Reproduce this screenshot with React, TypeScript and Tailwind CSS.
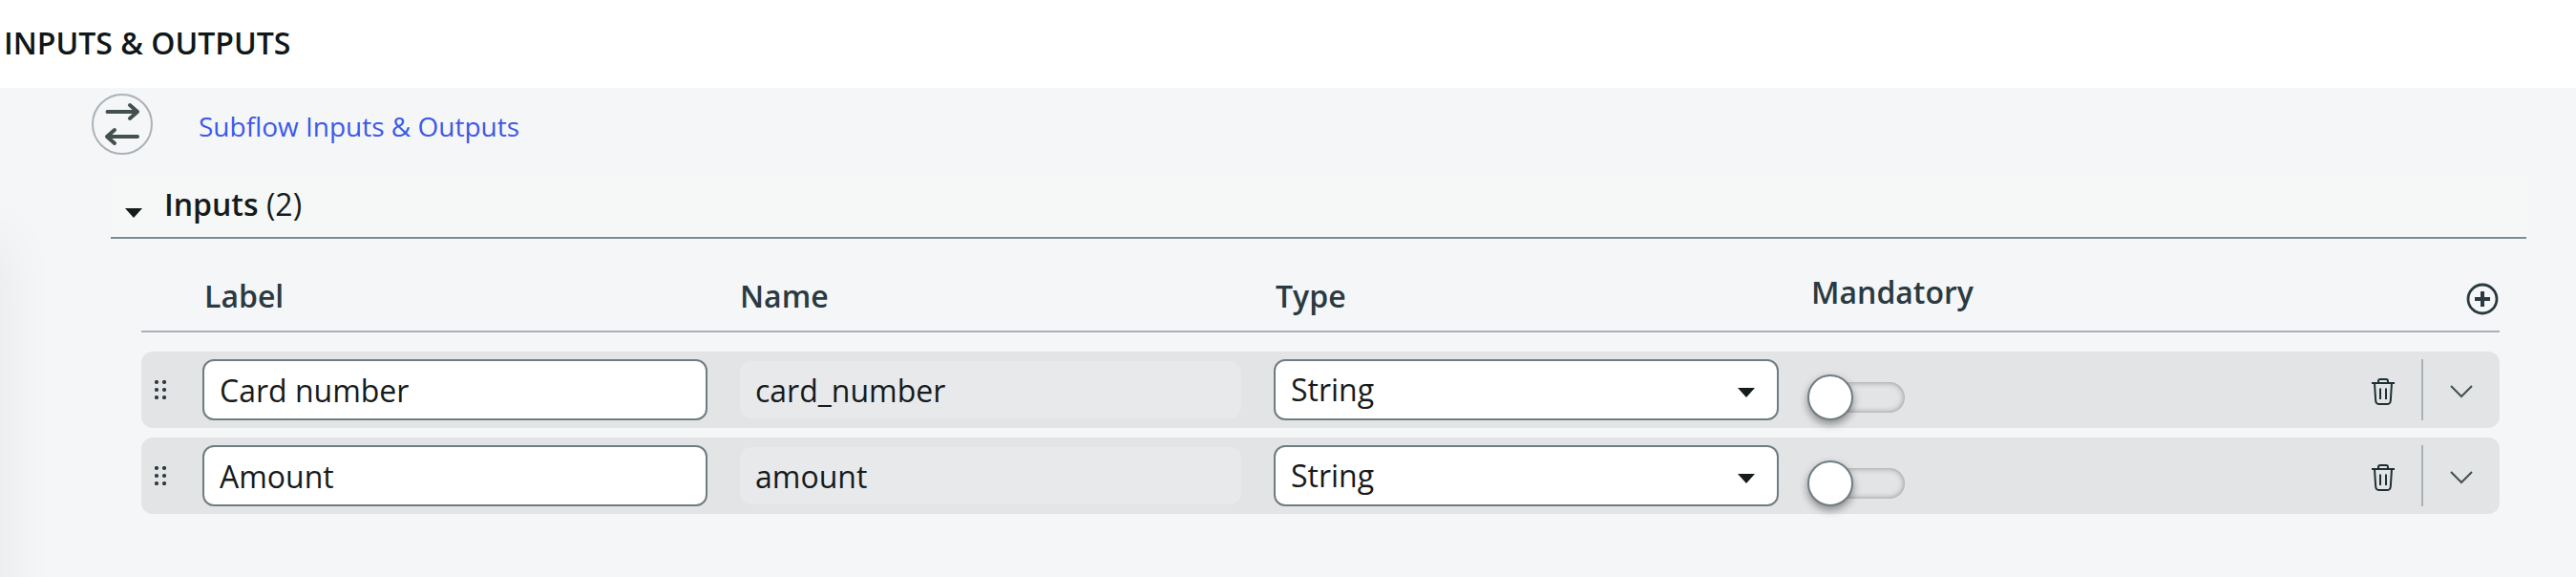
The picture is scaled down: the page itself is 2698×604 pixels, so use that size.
const rows = [
  { label: "Card number", name: "card_number", type: "String" },
  { label: "Amount", name: "amount", type: "String" },
];

function Caret({ className }: { className: string }) {
  return (
    <svg viewBox="0 0 18 10" className={className} fill="#161b1c">
      <path d="M0 0H18L9 10Z" />
    </svg>
  );
}

function SwapIcon() {
  return (
    <div className="h-16 w-16 shrink-0 rounded-full border-2 border-[#a9b2b8]">
      <svg viewBox="0 0 60 60" className="h-[60px] w-[60px]" fill="none" stroke="#43504f" strokeWidth="4" strokeLinecap="round" strokeLinejoin="round">
        <path d="M14.500 17H45M38 10L46 17L38 24" />
        <path d="M46 43H15M22 36L14 43L22 50" />
      </svg>
    </div>
  );
}

function Toggle() {
  return (
    <div className="mt-6 ml-[-2px] flex h-12 w-[102px] items-center">
      <div className="z-10 h-12 w-12 shrink-0 rounded-full border-2 border-[#6f7d83] bg-white shadow-[0_4px_8px_rgba(0,0,0,0.4)]" />
      <div className="-ml-10 h-8 w-[94px] rounded-full bg-[#e2e4e6] shadow-[inset_0_0_6px_rgba(0,0,0,0.4)]" />
    </div>
  );
}

function Row({ row }: { row: (typeof rows)[number] }) {
  return (
    <div className="flex h-20 rounded-xl bg-[#e2e4e6] text-[32px] leading-[62px] text-[#161b1c]">
      <div className="flex w-16 shrink-0 items-center pl-[14px]">
        <svg viewBox="0 0 12 20" className="h-5 w-3" fill="#2a3a40">
          {[2, 10].map((x) => [2, 10, 18].map((y) => <circle key={`${x}-${y}`} cx={x} cy={y} r="2.1" />))}
        </svg>
      </div>
      <div className="mt-2 h-16 w-[529px] shrink-0 rounded-xl border-2 border-[#6f7d83] bg-white pl-4">{row.label}</div>
      <div className="mt-[10px] ml-[34px] h-[60px] w-[525px] shrink-0 rounded-xl bg-[#e7e9eb] pl-4">{row.name}</div>
      <div className="mt-2 ml-[34px] flex h-16 w-[529px] shrink-0 items-center justify-between rounded-xl border-2 border-[#6f7d83] bg-white pr-[23px] pl-4">
        <span>{row.type}</span>
        <Caret className="mt-[6px] h-[10px] w-[18px]" />
      </div>
      <div className="w-[641px] shrink-0 pl-8">
        <Toggle />
      </div>
      <div className="flex flex-1 items-center">
        <svg viewBox="0 0 24 28" className="mt-1 ml-[-20px] h-7 w-6" fill="none" stroke="#1f2f34" strokeWidth="2">
          <path d="M0 5H24M7 5V3Q7 1 9 1H15Q17 1 17 3V5M3 5L4.2 23.5Q4.5 27 8 27H16Q19.5 27 19.8 23.5L21 5M9 10.5V22M15 10.5V22" />
        </svg>
        <div className="ml-7 h-16 w-[2px] bg-[#a9b2b8]" />
        <svg viewBox="0 0 24 14" className="mt-1 ml-7 h-[14px] w-6" fill="none" stroke="#43504f" strokeWidth="2">
          <path d="M1 1L12 12L23 1" />
        </svg>
      </div>
    </div>
  );
}

export default function App() {
  return (
    <div className="relative h-[604px] w-[2698px] overflow-hidden bg-[#f5f6f8] font-['Open_Sans',sans-serif] text-[#161b1c]">
      <div className="absolute top-[250px] -left-10 h-[600px] w-10 shadow-[0_0_60px_rgba(0,0,0,0.08)]" />
      <header className="flex h-[92px] items-center bg-white pb-[2px] pl-1 text-[32px] font-semibold text-[#101719]">
        INPUTS &amp; OUTPUTS
      </header>
      <div className="flex h-[94px] pt-[6px] pl-24">
        <SwapIcon />
        <a className="mt-[14px] ml-12 text-[28px] leading-[40px] text-[#3c59e7]">Subflow Inputs &amp; Outputs</a>
      </div>
      <div className="ml-[116px] flex h-16 w-[2530px] border-b-2 border-[#7d8c91] bg-[#f6f8f7] pl-[15px]">
        <Caret className="mt-[32px] h-[10px] w-[18px]" />
        <div className="ml-[23px] text-[32px] leading-[56px]">
          <span className="font-semibold">Inputs</span> (2)
        </div>
      </div>
      <div className="ml-[148px] w-[2470px]">
        <div className="flex h-[98px] border-b-2 border-[#a9b2b8] pt-[38px] pl-16 text-[32px] leading-[44px] font-semibold text-[#2a3a40]">
          <div className="w-[561px] pl-[2px]">Label</div>
          <div className="w-[561px] pl-[2px]">Name</div>
          <div className="w-[561px] pl-[2px]">Type</div>
          <div className="-mt-1 flex-1 pl-[2px]">Mandatory</div>
          <svg viewBox="0 0 34 34" className="mt-2 mr-[1px] h-[34px] w-[34px]" fill="none" stroke="#2a3a40">
            <circle cx="17" cy="17" r="15" strokeWidth="2.8" />
            <path d="M17 9V25M9 17H25" strokeWidth="4" />
          </svg>
        </div>
        <div className="mt-5 flex flex-col gap-[10px]">
          {rows.map((row) => (
            <Row key={row.name} row={row} />
          ))}
        </div>
      </div>
    </div>
  );
}
